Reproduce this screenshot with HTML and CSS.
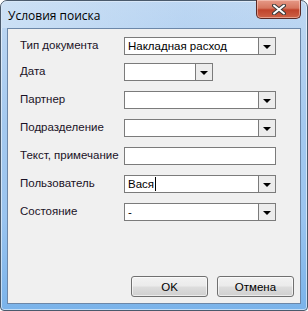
FILE: index.html
```html
<!DOCTYPE html>
<html lang="ru">
<head>
  <meta charset="UTF-8" />
  <title>Условия поиска</title>
  <link rel="stylesheet" href="styles.css">
</head>
<body>

  <!-- WINDOW -->
  <div class="window">
    <div class="titlebar">
      <span class="title">Условия поиска</span>
      <div class="close-btn">
        <svg viewBox="0 0 14 11" width="14" height="11">
          <path d="M2 1.5 L12 9.5 M12 1.5 L2 9.5" stroke="#3c3c3c" stroke-width="4" stroke-linecap="round"/>
          <path d="M2 1.5 L12 9.5 M12 1.5 L2 9.5" stroke="#fff" stroke-width="2" stroke-linecap="round"/>
        </svg>
      </div>
    </div>

    <div class="client">
      <div class="form">
        <div class="row row-first">
          <label>Тип документа</label>
          <div class="combo">
            <span class="combo-text">Накладная расход</span>
            <span class="combo-btn"><i class="arrow"></i></span>
          </div>
        </div>
        <div class="row row-second">
          <label>Дата</label>
          <div class="combo combo-date">
            <span class="combo-text"></span>
            <span class="combo-btn"><i class="arrow"></i></span>
          </div>
        </div>
        <div class="row">
          <label>Партнер</label>
          <div class="combo">
            <span class="combo-text"></span>
            <span class="combo-btn"><i class="arrow"></i></span>
          </div>
        </div>
        <div class="row">
          <label>Подразделение</label>
          <div class="combo">
            <span class="combo-text"></span>
            <span class="combo-btn"><i class="arrow"></i></span>
          </div>
        </div>
        <div class="row">
          <label>Текст, примечание</label>
          <div class="textbox"></div>
        </div>
        <div class="row">
          <label>Пользователь</label>
          <div class="combo">
            <span class="combo-text">Вася<i class="caret"></i></span>
            <span class="combo-btn"><i class="arrow"></i></span>
          </div>
        </div>
        <div class="row row-last">
          <label>Состояние</label>
          <div class="combo">
            <span class="combo-text">-</span>
            <span class="combo-btn"><i class="arrow"></i></span>
          </div>
        </div>
      </div>

      <div class="buttons">
        <button>OK</button>
        <button>Отмена</button>
      </div>
    </div>
  </div>

</body>
</html>
```

FILE: styles.css
```css
/* RESET */
*, *::before, *::after {
  box-sizing: border-box;
  margin: 0;
  padding: 0;
}

html, body {
  width: 308px;
  height: 311px;
  overflow: hidden;
  background: #fff;
}

body {
  font-family: 'Liberation Sans', Arial, sans-serif;
  font-size: 11.5px;
  color: #000;
}

/* WINDOW FRAME */
.window {
  width: 308px;
  height: 311px;
  display: flex;
  flex-direction: column;
  border: 1px solid #4a5a6c;
  border-radius: 7px 7px 4px 4px;
  background: linear-gradient(180deg, #c0d8f2 0%, #a4c9ef 40%, #9ac4ef 70%, #7ab3ea 100%);
  box-shadow: inset 0 0 0 1px rgba(255,255,255,0.55);
}

.titlebar {
  height: 27px;
  display: flex;
  align-items: flex-start;
  padding-left: 7px;
  padding-right: 6px;
  background: linear-gradient(90deg, rgba(210,228,246,0.7) 0%, rgba(175,208,243,0.2) 60%, rgba(160,200,240,0) 100%);
  border-radius: 6px 6px 0 0;
}

.title {
  font-family: 'Open Sans', 'Liberation Sans', sans-serif;
  font-size: 12px;
  color: #000;
  margin-top: 6px;
}

.close-btn {
  margin-left: auto;
  width: 45px;
  height: 19px;
  margin-top: -1px;
  border: 1px solid #5a2a26;
  border-top: none;
  border-radius: 0 0 5px 5px;
  background: linear-gradient(180deg, #e69a88 0%, #d6765f 45%, #c0432b 55%, #cd6247 100%);
  box-shadow: inset 0 0 0 1px rgba(255,220,210,0.5);
  display: flex;
  justify-content: center;
  align-items: center;
}

/* CLIENT AREA */
.client {
  flex: 1;
  margin: 0 6px 6px 6px;
  background: #f0f0f0;
  border: 1px solid #6c87a8;
  display: flex;
  flex-direction: column;
  padding: 8px 6px 6px 12px;
}

.form {
  display: flex;
  flex-direction: column;
}

.row {
  display: flex;
  align-items: flex-start;
  height: 18px;
  margin-top: 10px;
}

.row-first {
  margin-top: 0;
}

.row-second {
  margin-top: 8px;
}

.row label {
  width: 104px;
  flex-shrink: 0;
  line-height: 16px;
  color: #1a1226;
}

.combo, .textbox {
  width: 152px;
  height: 18px;
  border: 1px solid #7b7b7b;
  background: #fff;
  display: flex;
}

.combo-date {
  width: 89px;
}

.combo-text {
  flex: 1;
  padding-left: 3px;
  line-height: 16px;
  white-space: nowrap;
  overflow: hidden;
  display: flex;
  align-items: center;
}

.caret {
  display: inline-block;
  width: 1px;
  height: 14px;
  background: #000;
  margin-left: 1px;
}

.combo-btn {
  width: 17px;
  border-left: 1px solid #7b7b7b;
  background: #ececec;
  display: flex;
  justify-content: center;
  align-items: center;
}

.arrow {
  width: 0;
  height: 0;
  border-left: 4px solid transparent;
  border-right: 4px solid transparent;
  border-top: 4px solid #000;
  margin-top: 1px;
}

/* BUTTONS */
.buttons {
  margin-top: auto;
  display: flex;
  justify-content: flex-end;
  gap: 9px;
}

.buttons button {
  width: 77px;
  height: 21px;
  font-family: 'Liberation Sans', Arial, sans-serif;
  font-size: 11.5px;
  color: #000;
  border: 1px solid #707070;
  border-radius: 3px;
  background: linear-gradient(180deg, #f2f2f2 0%, #ebebeb 48%, #dddddd 52%, #cfcfcf 100%);
  box-shadow: inset 0 0 0 1px rgba(255,255,255,0.6);
}
```
